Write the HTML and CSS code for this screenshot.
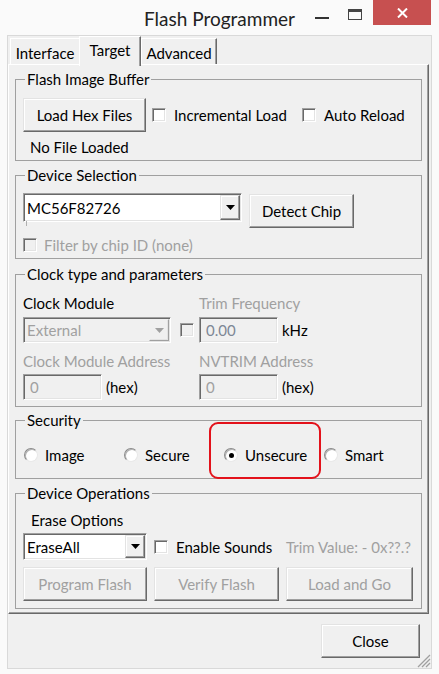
FILE: index.html
```html
<!DOCTYPE html>
<html>
<head>
<meta charset="utf-8">
<link rel="stylesheet" href="styles.css">
</head>
<body>
<div class="titlebar">
  <div class="title">Flash Programmer</div>
  <div class="controls">
    <div class="ctl-min"></div>
    <div class="ctl-max"></div>
    <div class="ctl-close"><svg width="11" height="10" viewBox="0 0 11 10"><path d="M1 0.5 L10 9.5 M10 0.5 L1 9.5" stroke="#fff" stroke-width="2"/></svg></div>
  </div>
</div>
<div class="client">
  <div class="tabs">
    <div class="tab tab-interface">Interface</div>
    <div class="tab tab-target active">Target</div>
    <div class="tab tab-advanced">Advanced</div>
  </div>
  <div class="panel">
    <fieldset class="group g1">
      <legend>Flash Image Buffer</legend>
      <div class="gbody">
        <div class="row">
          <div class="btn btn-load">Load Hex Files</div>
          <div class="chkitem w-inc"><span class="chk"></span><span class="lbl">Incremental Load</span></div>
          <div class="chkitem"><span class="chk"></span><span class="lbl">Auto Reload</span></div>
        </div>
        <div class="status">No File Loaded</div>
      </div>
    </fieldset>

    <fieldset class="group g2">
      <legend>Device Selection</legend>
      <div class="gbody">
        <div class="row top">
          <div class="combo combo-dev">
            <span class="val">MC56F82726</span>
            <span class="dd"><svg width="9" height="5" viewBox="0 0 9 5"><path d="M0 0 H9 L4.5 5 Z" fill="#000"/></svg></span>
            <span class="stub"></span>
          </div>
          <div class="btn btn-detect">Detect Chip</div>
        </div>
        <div class="chkitem dis filter"><span class="chk dis"></span><span class="lbl">Filter by chip ID (none)</span></div>
      </div>
    </fieldset>

    <fieldset class="group g3">
      <legend>Clock type and parameters</legend>
      <div class="gbody">
        <div class="row r1">
          <div class="cell">Clock Module</div>
          <div class="cell gray">Trim Frequency</div>
        </div>
        <div class="row r2">
          <div class="cell">
            <div class="combo combo-clk dis">
              <span class="val">External</span>
              <span class="dd"><svg width="9" height="5" viewBox="0 0 9 5"><path d="M0 0 H9 L4.5 5 Z" fill="#a0a0a0"/></svg></span>
            </div>
            <span class="chk dis chk-trim"></span>
          </div>
          <div class="cell">
            <div class="field dis trimval">0.00</div><span class="unit">kHz</span>
          </div>
        </div>
        <div class="row r3">
          <div class="cell gray">Clock Module Address</div>
          <div class="cell gray">NVTRIM Address</div>
        </div>
        <div class="row r4">
          <div class="cell"><div class="field dis">0</div><span class="unit">(hex)</span></div>
          <div class="cell"><div class="field dis">0</div><span class="unit">(hex)</span></div>
        </div>
      </div>
    </fieldset>

    <fieldset class="group g4">
      <legend>Security</legend>
      <div class="gbody">
        <div class="row">
          <div class="radioitem"><span class="radio"></span><span class="lbl">Image</span></div>
          <div class="radioitem"><span class="radio"></span><span class="lbl">Secure</span></div>
          <div class="radioitem marked"><span class="radio on"></span><span class="lbl">Unsecure</span><span class="highlight"></span></div>
          <div class="radioitem"><span class="radio"></span><span class="lbl">Smart</span></div>
        </div>
      </div>
    </fieldset>

    <fieldset class="group g5">
      <legend>Device Operations</legend>
      <div class="gbody">
        <div class="erase-lbl">Erase Options</div>
        <div class="row r2">
          <div class="combo combo-erase">
            <span class="val">EraseAll</span>
            <span class="dd"><svg width="9" height="5" viewBox="0 0 9 5"><path d="M0 0 H9 L4.5 5 Z" fill="#000"/></svg></span>
          </div>
          <div class="chkitem w-snd"><span class="chk"></span><span class="lbl">Enable Sounds</span></div>
          <div class="gray">Trim Value: - 0x??.?</div>
        </div>
        <div class="row r3">
          <div class="btn dis b-prog">Program Flash</div>
          <div class="btn dis b-ver">Verify Flash</div>
          <div class="btn dis b-go">Load and Go</div>
        </div>
      </div>
    </fieldset>
  </div>
  <div class="footer">
    <div class="btn btn-close">Close</div>
  </div>
  <div class="grip"><svg width="15" height="15" viewBox="0 0 15 15"><path d="M14 2 L2 14 M14 6 L6 14 M14 10 L10 14" stroke="#a0a0a0" stroke-width="1.3"/></svg></div>
</div>
</body>
</html>
```

FILE: styles.css
```css
* { box-sizing: border-box; }
html, body { margin: 0; padding: 0; }
body {
  width: 439px;
  height: 674px;
  overflow: hidden;
  background: #fafafa;
  font-family: Lato, "Noto Sans", "DejaVu Sans", sans-serif;
  font-size: 15px;
  color: #000;
}

/* title bar */
.titlebar {
  height: 35px;
  display: grid;
  grid-template-columns: 1fr auto 1fr;
  align-items: start;
}
.title {
  grid-column: 2;
  font-size: 19px;
  line-height: 22px;
  margin-top: 8px;
  color: #222;
  white-space: nowrap;
}
.controls {
  grid-column: 3;
  justify-self: end;
  display: flex;
  align-items: flex-start;
  margin-right: 8px;
}
.ctl-min { width: 14px; height: 2px; background: #333; margin-top: 17px; margin-right: 19px; }
.ctl-max { width: 14px; height: 11px; border: 1px solid #444; border-top-width: 3px; margin-top: 9px; margin-right: 11px; }
.ctl-close {
  width: 58px; height: 25px; background: #c75050;
  display: flex; align-items: center; justify-content: center;
}

/* client */
.client {
  position: relative;
  margin-left: 7px;
  width: 425px;
  height: 634px;
  border: 1px solid #d9d9d9;
  background: #f0f0f0;
  display: flex;
  flex-direction: column;
}
.tabs {
  position: relative;
  z-index: 2;
  display: flex;
  align-items: flex-end;
  height: 28px;
  padding-left: 2px;
  flex: none;
}
.tab {
  height: 26px;
  padding-top: 4px;
  line-height: 20px;
  text-align: center;
  background: #f0f0f0;
  border-top: 1px solid #fff;
  border-left: 1px solid #fff;
  border-right: 1px solid #696969;
  box-shadow: inset -1px 0 #a0a0a0;
  white-space: nowrap;
}
.tab-interface { width: 69px; border-right: none; box-shadow: none; }
.tab-target { width: 62px; }
.tab-advanced { width: 76px; }
.tab.active { height: 30px; margin-bottom: -2px; padding-top: 3px; }

.panel {
  flex: none;
  width: 421px;
  height: 550px;
  border-top: 1px solid #fff;
  border-left: 1px solid #fff;
  border-right: 1px solid #696969;
  border-bottom: 1px solid #696969;
  box-shadow: inset -1px -1px #a0a0a0;
  padding: 5px 0 0 6px;
}

/* group boxes */
.group {
  margin: 0;
  padding: 0;
  width: 407px;
  border: 1px solid #a0a0a0;
  min-width: 0;
}
.group legend {
  margin-left: 9px;
  padding: 0 2px;
  line-height: 18px;
}
.gbody { padding-left: 7px; }
.row { display: flex; align-items: center; }
.row.top { align-items: flex-start; }

.g1 .gbody { padding-top: 10px; padding-bottom: 4px; }
.g1 .row { height: 34px; }
.status { margin-top: 6px; margin-left: 7px; line-height: 18px; }
.w-inc { width: 150px; }

.g2 { margin-top: 5px; }
.g2 .gbody { padding-top: 9px; padding-bottom: 4px; }
.filter { margin-top: 8px; height: 18px; }

.g3 { margin-top: 6px; }
.g3 .gbody { padding-top: 11px; padding-bottom: 6px; }
.g3 .cell { width: 176px; display: flex; align-items: center; flex: none; }
.g3 .r1, .g3 .r3 { height: 18px; line-height: 18px; }
.g3 .r2 { margin-top: 5px; height: 26px; }
.g3 .r3 { margin-top: 9px; }
.g3 .r4 { margin-top: 4px; height: 26px; }
.unit { margin-left: 4px; }

.g4 { margin-top: 4px; }
.g4 .gbody { padding-top: 17px; padding-bottom: 14px; padding-left: 8px; }
.g4 .row { height: 18px; }
.radioitem { width: 100px; display: flex; align-items: center; flex: none; }
.radioitem.marked { position: relative; }
.highlight {
  position: absolute;
  left: -15px;
  top: -24px;
  width: 112px;
  height: 57px;
  border: 2px solid #e3121b;
  border-radius: 9px;
}

.g5 { margin-top: 5px; }
.g5 .gbody { padding-top: 9px; padding-bottom: 7px; }
.erase-lbl { margin-left: 8px; line-height: 18px; }
.g5 .r2 { margin-top: 4px; height: 27px; }
.g5 .r3 { margin-top: 7px; gap: 7px; }
.w-snd { width: 132px; margin-left: 7px; }

/* controls */
.btn {
  display: flex;
  align-items: center;
  justify-content: center;
  height: 34px;
  background: #f0f0f0;
  border: 1px solid;
  border-color: #e3e3e3 #696969 #696969 #e3e3e3;
  box-shadow: inset -1px -1px #a0a0a0, inset 1px 1px #fff;
  white-space: nowrap;
  flex: none;
}
.btn.dis { color: #a0a0a0; }
.btn-load { width: 123px; margin-right: 6px; }
.btn-detect { width: 105px; margin-left: 7px; margin-top: 1px; }
.b-prog { width: 124px; }
.b-ver { width: 125px; }
.b-go { width: 127px; }

.chkitem { display: flex; align-items: center; flex: none; white-space: nowrap; }
.chk {
  display: inline-block;
  width: 14px;
  height: 14px;
  flex: none;
  background: #fff;
  border: 1px solid;
  border-color: #a0a0a0 #fff #fff #a0a0a0;
  box-shadow: inset 1px 1px #696969, inset -1px -1px #e3e3e3;
}
.chk.dis { background: #f0f0f0; }
.chkitem .lbl { margin-left: 8px; }
.chkitem.dis .lbl { color: #a0a0a0; margin-left: 7px; }
.chk-trim { margin-left: 9px; }

.radio {
  display: inline-block;
  width: 14px;
  height: 14px;
  flex: none;
  border-radius: 50%;
  background: #fff;
  border: 1px solid;
  border-color: #8a8a8a #e8e8e8 #e8e8e8 #8a8a8a;
  box-shadow: inset 1px 1px #b0b0b0;
  position: relative;
}
.radio.on::after {
  content: "";
  position: absolute;
  left: 3.5px;
  top: 3.5px;
  width: 5px;
  height: 5px;
  border-radius: 50%;
  background: #000;
}
.radioitem .lbl { margin-left: 7px; }

.combo {
  position: relative;
  display: flex;
  align-items: stretch;
  flex: none;
  background: #fff;
  border: 1px solid;
  border-color: #a0a0a0 #fff #fff #a0a0a0;
  box-shadow: inset 1px 1px #696969, inset -1px -1px #e3e3e3;
  padding: 1px;
}
.combo .val { flex: 1; padding-left: 2px; display: flex; align-items: center; white-space: nowrap; }
.combo .dd {
  width: 20px;
  flex: none;
  display: flex;
  align-items: center;
  justify-content: center;
  background: #f0f0f0;
  border: 1px solid;
  border-color: #e3e3e3 #696969 #696969 #e3e3e3;
  box-shadow: inset -1px -1px #a0a0a0, inset 1px 1px #fff;
}
.combo.dis { background: #f0f0f0; }
.combo.dis .val { color: #a0a0a0; }
.combo.dis .dd { border-color: #f0f0f0 #a0a0a0 #a0a0a0 #f0f0f0; box-shadow: inset -1px -1px #e3e3e3; }
.combo-dev { width: 219px; height: 29px; }
.combo-dev .stub {
  position: absolute;
  left: 2px;
  top: 100%;
  width: 1px;
  height: 5px;
  background: #b0b0b0;
}
.combo-clk { width: 148px; height: 26px; }
.combo-erase { width: 124px; height: 27px; }

.field {
  width: 79px;
  height: 26px;
  flex: none;
  display: flex;
  align-items: center;
  padding-left: 6px;
  border: 1px solid;
  border-color: #a0a0a0 #fff #fff #a0a0a0;
  box-shadow: inset 1px 1px #696969, inset -1px -1px #e3e3e3;
  background: #fff;
}
.field.dis { background: #f0f0f0; color: #a0a0a0; }
.field.trimval { color: #7d8795; }

.gray { color: #a0a0a0; white-space: nowrap; }

.footer {
  flex: 1;
  display: flex;
  justify-content: flex-end;
  align-items: flex-start;
  padding-top: 10px;
  padding-right: 11px;
}
.btn-close { width: 99px; }
.grip {
  position: absolute;
  right: 0;
  bottom: 0;
  width: 15px;
  height: 15px;
}
.grip svg { display: block; }
```
